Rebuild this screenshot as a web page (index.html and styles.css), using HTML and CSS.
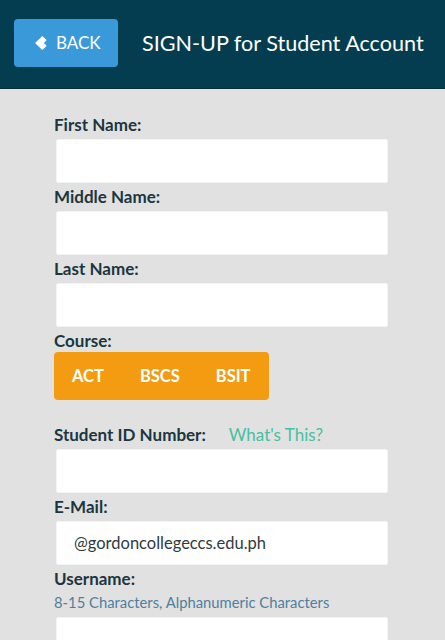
FILE: index.html
```html
<!DOCTYPE html>
<html lang="en">
<head>
<meta charset="utf-8">
<title>SIGN-UP for Student Account</title>
<link rel="stylesheet" href="styles.css">
</head>
<body>
<header class="topbar">
  <a class="back-btn" href="#">
    <svg class="chev" viewBox="0 0 12 14" width="12" height="14" aria-hidden="true">
      <path d="M1 7 L7.2 0.8 L10.8 4.2 L7.9 7 L10.8 9.8 L7.2 13.2 Z" fill="#ffffff" stroke="#ffffff" stroke-width="1.2" stroke-linejoin="round"/>
    </svg>
    <span>BACK</span>
  </a>
  <h1 class="title">SIGN-UP for Student Account</h1>
</header>
<main class="form">
  <label class="lbl">First Name:</label>
  <input class="field" type="text">
  <label class="lbl">Middle Name:</label>
  <input class="field" type="text">
  <label class="lbl">Last Name:</label>
  <input class="field" type="text">
  <label class="lbl lbl-course">Course:</label>
  <div class="course-group">
    <button class="course-btn" type="button">ACT</button>
    <button class="course-btn" type="button">BSCS</button>
    <button class="course-btn" type="button">BSIT</button>
  </div>
  <div class="lbl lbl-id"><span>Student ID Number:</span><a class="whats" href="#">What's This?</a></div>
  <input class="field" type="text">
  <label class="lbl">E-Mail:</label>
  <input class="field field-mail" type="text" value="@gordoncollegeccs.edu.ph">
  <label class="lbl lbl-user">Username:</label>
  <div class="hint">8-15 Characters, Alphanumeric Characters</div>
  <input class="field" type="text">
</main>
</body>
</html>
```
FILE: styles.css
```css
html, body {
  margin: 0;
  padding: 0;
  overflow: hidden;
}
body {
  background: #e1e1e1;
  font-family: Lato, "Open Sans", sans-serif;
  height: 640px;
}
.topbar {
  box-sizing: border-box;
  height: 89px;
  background: #033d4f;
  border-bottom: 1px solid #02303e;
  display: flex;
  align-items: center;
  padding: 0 14px;
  gap: 24px;
}
.back-btn {
  box-sizing: border-box;
  width: 104px;
  height: 48px;
  margin-top: -2px;
  background: #3a9ad9;
  border-radius: 4px;
  display: flex;
  align-items: center;
  padding-left: 21px;
  gap: 9px;
  color: #ffffff;
  text-decoration: none;
  font-size: 17px;
  line-height: 20px;
}
.chev { display: block; }
.title {
  margin: 0;
  margin-top: -2px;
  color: #ffffff;
  font-weight: 400;
  font-size: 21.6px;
  line-height: 26px;
  white-space: nowrap;
}
.form {
  display: flex;
  flex-direction: column;
  align-items: flex-start;
  padding: 22px 0 0 54px;
}
.lbl {
  display: block;
  font-size: 17px;
  font-weight: 700;
  line-height: 20px;
  color: #1b3640;
  margin: 4px 0 4px;
}
.field {
  box-sizing: border-box;
  width: 332px;
  height: 44px;
  margin-left: 2px;
  border: 1px solid #f2f5f6;
  border-radius: 2px;
  background: #ffffff;
  font-family: Lato, sans-serif;
  font-size: 16.5px;
  color: #2f3a3f;
  padding: 0 17px;
  outline: none;
}
.lbl-course { margin-bottom: 1px; }
.course-group {
  display: flex;
  background: #f39c12;
  border-radius: 4px;
  overflow: hidden;
}
.course-btn {
  height: 48px;
  padding: 0 18px;
  border: none;
  background: transparent;
  color: #ffffff;
  font-family: Lato, sans-serif;
  font-size: 16.5px;
  font-weight: 700;
  cursor: pointer;
}
.lbl-id {
  margin-top: 25px;
  margin-bottom: 4px;
  display: flex;
  gap: 23px;
}
.whats {
  font-weight: 400;
  color: #48bf9e;
  text-decoration: none;
}
.lbl-user { margin-bottom: 0; }
.hint {
  font-size: 14.8px;
  line-height: 16px;
  color: #4f7f9e;
  margin: 5px 0 7px;
}
```
